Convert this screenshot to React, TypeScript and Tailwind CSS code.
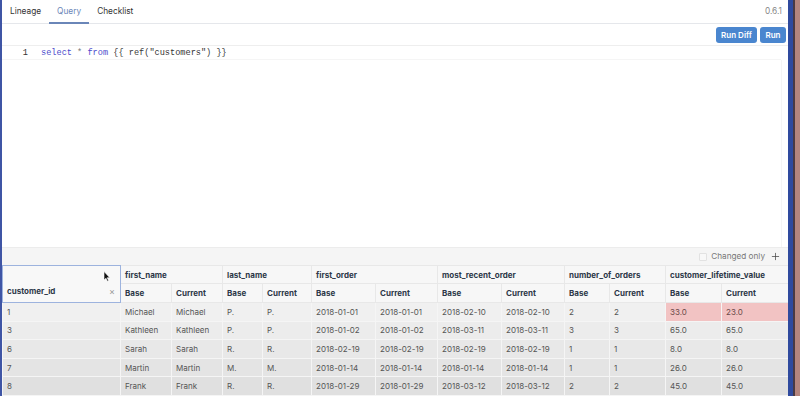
import { Plus } from 'lucide-react';

const widths = [118, 51, 51, 40, 49, 64, 62, 64, 63, 45, 56, 56, 67];

const groups = [
  { name: 'first_name', span: 2 },
  { name: 'last_name', span: 2 },
  { name: 'first_order', span: 2 },
  { name: 'most_recent_order', span: 2 },
  { name: 'number_of_orders', span: 2 },
  { name: 'customer_lifetime_value', span: 2 },
];

const rows = [
  ['1', 'Michael', 'Michael', 'P.', 'P.', '2018-01-01', '2018-01-01', '2018-02-10', '2018-02-10', '2', '2', '33.0', '23.0'],
  ['3', 'Kathleen', 'Kathleen', 'P.', 'P.', '2018-01-02', '2018-01-02', '2018-03-11', '2018-03-11', '3', '3', '65.0', '65.0'],
  ['6', 'Sarah', 'Sarah', 'R.', 'R.', '2018-02-19', '2018-02-19', '2018-02-19', '2018-02-19', '1', '1', '8.0', '8.0'],
  ['7', 'Martin', 'Martin', 'M.', 'M.', '2018-01-14', '2018-01-14', '2018-01-14', '2018-01-14', '1', '1', '26.0', '26.0'],
  ['8', 'Frank', 'Frank', 'R.', 'R.', '2018-01-29', '2018-01-29', '2018-03-12', '2018-03-12', '2', '2', '45.0', '45.0'],
];

const rowBg = ['bg-[#f0f0f0]', 'bg-[#ececec]', 'bg-[#e8e8e8]', 'bg-[#e4e4e4]', 'bg-[#e0e0e0]'];

function ResultGrid() {
  return (
    <table className="table-fixed border-collapse w-[786px] text-[8px]">
      <colgroup>
        {widths.map((w, i) => (
          <col key={i} style={{ width: w }} />
        ))}
      </colgroup>
      <thead className="bg-[#f7f7f7] text-[#2d3748] font-semibold">
        <tr className="h-[18px]">
          <th rowSpan={2} className="relative border border-[#9db3de] text-left align-bottom px-[4px] pb-[5px] bg-[#f8f8f8]">
            <div className="flex items-center justify-between">
              <span>customer_id</span>
              <span className="text-[#999] font-normal text-[9px] leading-none pr-[1px]">×</span>
            </div>
            <svg className="absolute left-[100px] top-[5px]" width="8" height="11" viewBox="0 0 8 11">
              <path d="M1 0.5 L1 9 L3 7.2 L4.4 10.2 L5.6 9.6 L4.2 6.7 L6.8 6.7 Z" fill="#111" stroke="#fff" strokeWidth="0.6" />
            </svg>
          </th>
          {groups.map(g => (
            <th key={g.name} colSpan={g.span} className="border border-[#e8e8e8] text-left px-[4px] whitespace-nowrap">
              {g.name}
            </th>
          ))}
        </tr>
        <tr className="h-[19px]">
          {groups.flatMap(g => [
            <th key={g.name + 'b'} className="border border-[#e8e8e8] text-left px-[4px]">Base</th>,
            <th key={g.name + 'c'} className="border border-[#e8e8e8] text-left px-[4px]">Current</th>,
          ])}
        </tr>
      </thead>
      <tbody className="text-[#555]">
        {rows.map((r, ri) => (
          <tr key={ri} className={`h-[18.6px] ${rowBg[ri]}`}>
            {r.map((c, ci) => (
              <td
                key={ci}
                className={`border border-[#f5f5f5] px-[4px] whitespace-nowrap ${ri === 0 && ci >= 11 ? 'bg-[#f2c3c3] text-[#6b4a4a]' : ''}`}
              >
                {c}
              </td>
            ))}
          </tr>
        ))}
      </tbody>
    </table>
  );
}

export default function App() {
  return (
    <div className="w-[800px] h-[396px] flex overflow-hidden bg-[#b4857e] font-['Inter',sans-serif]">
      <div className="w-[788px] h-full flex flex-col bg-white border-l-2 border-[#3f55a5] overflow-hidden">
        {/* tabs */}
        <div className="h-[24px] shrink-0 flex items-stretch border-b border-[#e5e7eb] text-[8.3px]">
          <div className="px-[8px] flex items-center text-[#333]">Lineage</div>
          <div className="px-[8px] flex items-center text-[#6a86b8] border-b-2 border-[#6a86b8] -mb-px">Query</div>
          <div className="px-[8px] flex items-center text-[#333]">Checklist</div>
          <div className="ml-auto pr-[6px] flex items-center text-[#888] text-[8.3px]">0.6.1</div>
        </div>
        {/* toolbar */}
        <div className="h-[22px] shrink-0 flex items-center justify-end gap-[3px] pr-[2px] border-b border-[#eeeeee]">
          <button className="h-[16px] w-[41px] rounded-[3px] bg-[#4a86cf] text-white text-[8px] font-semibold">Run Diff</button>
          <button className="h-[16px] w-[26px] rounded-[3px] bg-[#4a86cf] text-white text-[8px] font-semibold">Run</button>
        </div>
        {/* editor */}
        <div className="h-[201px] shrink-0 flex">
          <div className="flex-1 flex flex-col">
            <div className="h-[13px] mt-[1px] flex items-center border-b border-[#f5f5f5] font-['Liberation_Mono',monospace] text-[8.6px]">
              <span className="w-[26px] text-right text-[#333]">1</span>
              <span className="pl-[13px] text-[#3a3a3a] whitespace-pre">
                <span className="text-[#4b4bcc]">select</span>
                <span className="text-[#777]"> * </span>
                <span className="text-[#4b4bcc]">from</span>
                <span> {'{{'} ref(</span>
                <span className="text-[#333]">"customers"</span>
                <span>) {'}}'}</span>
              </span>
            </div>
          </div>
          <div className="w-[7px] border-l border-[#f5f5f5] mt-[14px]" />
        </div>
        {/* result toolbar */}
        <div className="h-[18px] shrink-0 flex items-center justify-end pr-[7px] bg-[#f5f5f5] border-t border-[#ececec] text-[8.2px] text-[#777]">
          <span className="w-[8px] h-[8px] border border-[#e2e2e2] rounded-[1px] mr-[4px] bg-[#f8f8f8]" />
          <span>Changed only</span>
          <Plus size={11} strokeWidth={1.6} className="ml-[5px] text-[#444]" />
        </div>
        {/* grid */}
        <div className="flex-1 overflow-hidden">
          <ResultGrid />
        </div>
      </div>
      <div className="w-[5px] h-full bg-[#2f4a9e]" />
      <div className="w-[2px] h-full bg-[#4a3a44]" />
      <div className="flex-1 h-full bg-[#b4857e]" />
    </div>
  );
}
